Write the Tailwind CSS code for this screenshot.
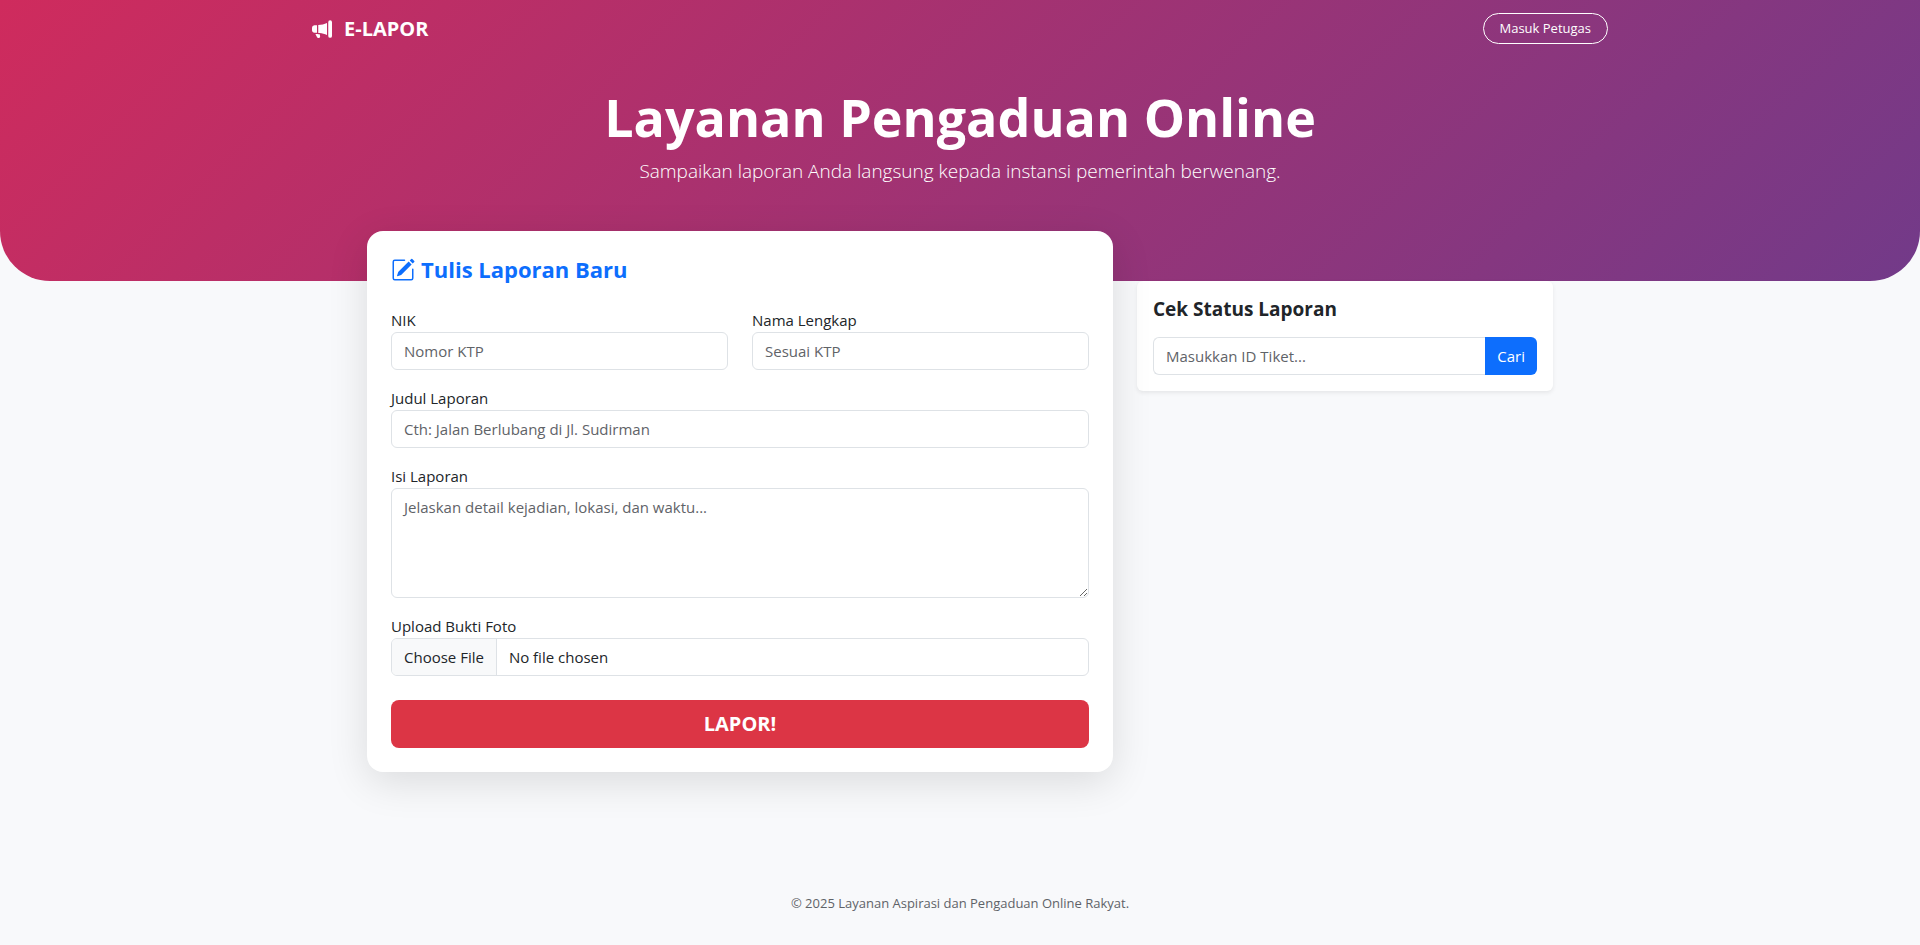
<!DOCTYPE html>
<html lang="id">
<head>
<meta charset="utf-8">
<meta name="viewport" content="width=device-width, initial-scale=1">
<title>E-LAPOR</title>
<script src="https://cdn.jsdelivr.net/npm/@tailwindcss/browser@4"></script>
</head>
<body class="min-h-screen bg-[#f8f9fb] font-['Open_Sans','Noto_Sans',sans-serif] text-[15px] leading-6 text-[#212529]">
  <header class="rounded-b-[50px] bg-[linear-gradient(135deg,#cf2b5d,#723a89)] pb-[95px] text-white">
    <nav class="mx-auto flex h-[57px] max-w-[1320px] items-center justify-between px-3">
      <a href="#" class="flex items-center text-[20px] font-bold">
        <svg class="mr-3 size-5" viewBox="0 0 16 16" fill="currentColor" aria-hidden="true"><path d="M13 2.5a1.5 1.5 0 0 1 3 0v11a1.5 1.5 0 0 1-3 0zm-1 .724c-2.067.95-4.539 1.481-7 1.656v6.237a25 25 0 0 1 1.088.085c2.053.204 4.038.668 5.912 1.56zm-8 7.841V4.934c-.68.027-1.399.043-2.008.053A2.02 2.02 0 0 0 0 7v2c0 1.106.896 1.996 1.994 2.009l.496.008a64 64 0 0 1 1.51.048m1.39 1.081q.428.032.85.078l.253 1.69a1 1 0 0 1-.983 1.187h-.548a1 1 0 0 1-.916-.599l-1.314-2.48a66 66 0 0 1 1.692.064q.491.026.966.06"/></svg>
        E-LAPOR
      </a>
      <a href="#" class="rounded-full border border-white px-4 py-1 text-[13px] leading-[21px]">Masuk Petugas</a>
    </nav>
    <div class="px-3 pt-[26px] text-center">
      <h1 class="text-[52px] leading-[67px] font-bold">Layanan Pengaduan Online</h1>
      <p class="mt-[6px] text-[19px] leading-[30px] font-light">Sampaikan laporan Anda langsung kepada instansi pemerintah berwenang.</p>
    </div>
  </header>

  <main class="mx-auto grid max-w-[1210px] grid-cols-1 items-start gap-6 px-3 lg:grid-cols-11">
    <section class="relative z-10 -mt-[50px] rounded-2xl bg-white p-6 shadow-[0_10px_40px_rgba(0,0,0,0.12)] lg:col-span-7">
      <h2 class="mb-6 flex items-center text-[22px] leading-[29px] font-bold text-[#0d6efd]">
        <svg class="mr-[6px] size-6" viewBox="0 0 16 16" fill="currentColor" aria-hidden="true"><path d="M15.502 1.94a.5.5 0 0 1 0 .706L14.459 3.69l-2-2L13.502.646a.5.5 0 0 1 .707 0l1.293 1.293zm-1.75 2.456-2-2L4.939 9.21a.5.5 0 0 0-.121.196l-.805 2.414a.25.25 0 0 0 .316.316l2.414-.805a.5.5 0 0 0 .196-.12l6.813-6.814z"/><path fill-rule="evenodd" d="M1 13.5A1.5 1.5 0 0 0 2.5 15h11a1.5 1.5 0 0 0 1.5-1.5v-6a.5.5 0 0 0-1 0v6a.5.5 0 0 1-.5.5h-11a.5.5 0 0 1-.5-.5v-11a.5.5 0 0 1 .5-.5H9a.5.5 0 0 0 0-1H2.5A1.5 1.5 0 0 0 1 2.5z"/></svg>
        Tulis Laporan Baru
      </h2>
      <form class="flex flex-col gap-4">
        <div class="grid grid-cols-1 gap-4 md:grid-cols-2 md:gap-6">
          <div>
            <label for="nik" class="block">NIK</label>
            <input id="nik" type="text" placeholder="Nomor KTP" class="block h-[38px] w-full rounded-md border border-[#dee2e6] bg-white px-3 placeholder:text-[#5f6368]">
          </div>
          <div>
            <label for="nama" class="block">Nama Lengkap</label>
            <input id="nama" type="text" placeholder="Sesuai KTP" class="block h-[38px] w-full rounded-md border border-[#dee2e6] bg-white px-3 placeholder:text-[#5f6368]">
          </div>
        </div>
        <div>
          <label for="judul" class="block">Judul Laporan</label>
          <input id="judul" type="text" placeholder="Cth: Jalan Berlubang di Jl. Sudirman" class="block h-[38px] w-full rounded-md border border-[#dee2e6] bg-white px-3 placeholder:text-[#5f6368]">
        </div>
        <div>
          <label for="isi" class="block">Isi Laporan</label>
          <textarea id="isi" rows="4" placeholder="Jelaskan detail kejadian, lokasi, dan waktu..." class="block h-[110px] w-full resize-y rounded-md border border-[#dee2e6] bg-white px-3 py-[6px] placeholder:text-[#5f6368]"></textarea>
        </div>
        <div>
          <label for="foto" class="block">Upload Bukti Foto</label>
          <input id="foto" type="file" class="block h-[38px] w-full rounded-md border border-[#dee2e6] bg-white file:mr-3 file:h-9 file:border-0 file:border-r file:border-solid file:border-[#dee2e6] file:bg-[#f8f9fa] file:px-3">
        </div>
        <button type="submit" class="mt-2 h-12 w-full rounded-lg bg-[#dc3545] text-[20px] font-bold text-white">LAPOR!</button>
      </form>
    </section>

    <aside class="rounded-md bg-white p-4 shadow-[0_2px_4px_rgba(0,0,0,0.075)] lg:col-span-4">
      <h2 class="mb-4 text-[19px] leading-6 font-bold"><label for="tiket">Cek Status Laporan</label></h2>
      <form class="flex">
        <input id="tiket" type="text" placeholder="Masukkan ID Tiket..." class="h-[38px] min-w-0 flex-1 rounded-l-md border border-r-0 border-[#dee2e6] bg-white px-3 placeholder:text-[#5f6368]">
        <button type="submit" class="h-[38px] rounded-r-md bg-[#0d6efd] px-3 text-white">Cari</button>
      </form>
    </aside>
  </main>

  <footer class="px-3 pt-[121px] pb-6 text-center text-[13px] leading-[21px] text-[#5f6368]">© 2025 Layanan Aspirasi dan Pengaduan Online Rakyat.</footer>
</body>
</html>
